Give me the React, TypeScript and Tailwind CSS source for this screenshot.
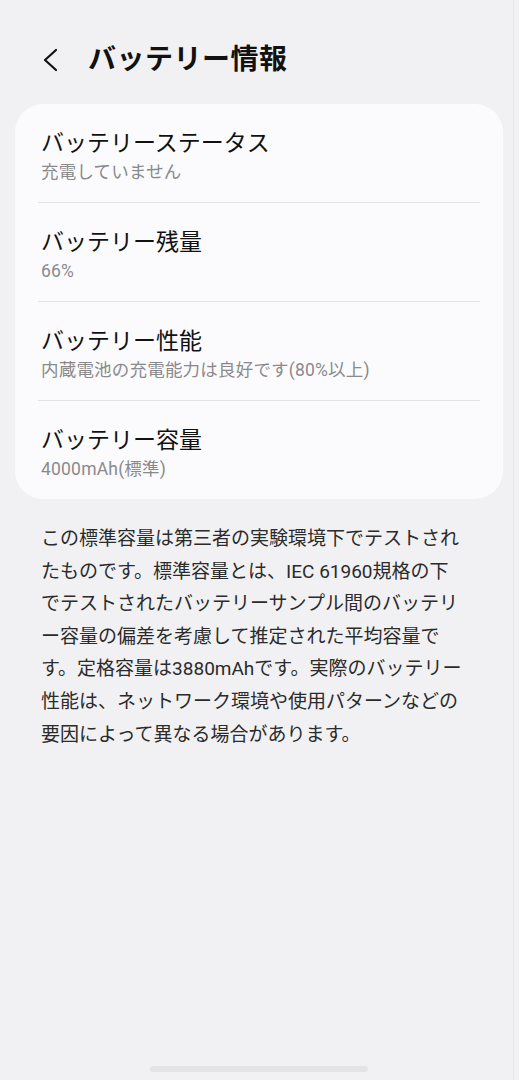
const rows = [
  { title: "バッテリーステータス", sub: "充電していません" },
  { title: "バッテリー残量", sub: "66%" },
  { title: "バッテリー性能", sub: "内蔵電池の充電能力は良好です(80%以上)" },
  { title: "バッテリー容量", sub: "4000mAh(標準)" },
]

const noteLines = [
  "この標準容量は第三者の実験環境下でテストされ",
  "たものです。標準容量とは、IEC 61960規格の下",
  "でテストされたバッテリーサンプル間のバッテリ",
  "ー容量の偏差を考慮して推定された平均容量で",
  "す。定格容量は3880mAhです。実際のバッテリー",
  "性能は、ネットワーク環境や使用パターンなどの",
  "要因によって異なる場合があります。",
]

export default function App() {
  return (
    <div
      className="relative flex h-[1080px] w-full flex-col overflow-hidden bg-[#f1f1f3] text-[#111]"
      style={{ fontFamily: 'Roboto, "Noto Sans CJK JP", "Noto Sans", sans-serif' }}
    >
      <header className="flex h-[104px] items-center pt-[16px] pl-[38px]">
        <svg width="24" height="28" viewBox="0 0 24 28" fill="none" className="mr-[26px]">
          <path d="M18 4 L7 14 L18 24" stroke="#111" strokeWidth="2.2" strokeLinecap="round" strokeLinejoin="round" />
        </svg>
        <h1 className="text-[28px] font-bold leading-none tracking-[0.5px]">バッテリー情報</h1>
      </header>

      <section className="mx-[15px] w-[488px] rounded-[28px] bg-[#fbfbfd] px-[23px]">
        {rows.map((row, i) => (
          <div
            key={row.title}
            className={`flex flex-col pt-[25px] pl-[3px] ${i < rows.length - 1 ? "h-[99px] border-b border-[#e3e3e6]" : "h-[98px]"}`}
          >
            <p className="text-[23px] leading-[30px] text-[#111]">{row.title}</p>
            <p className="text-[17.5px] leading-[26px] tracking-[0.2px] text-[#8a8a8c]">{row.sub}</p>
          </div>
        ))}
      </section>

      <div className="mt-[24px] pl-[41px] text-[19px] leading-[32.6px] text-[#2b2b2b]">
        {noteLines.map((line) => (
          <p key={line} className="whitespace-nowrap">{line}</p>
        ))}
      </div>

      <div className="absolute bottom-[8px] left-[150px] h-[6px] w-[218px] rounded-full bg-[#e4e4e7]" />
      <div className="absolute right-[5px] top-0 h-full w-[1px] bg-[#e7e7ea]" />
    </div>
  )
}
